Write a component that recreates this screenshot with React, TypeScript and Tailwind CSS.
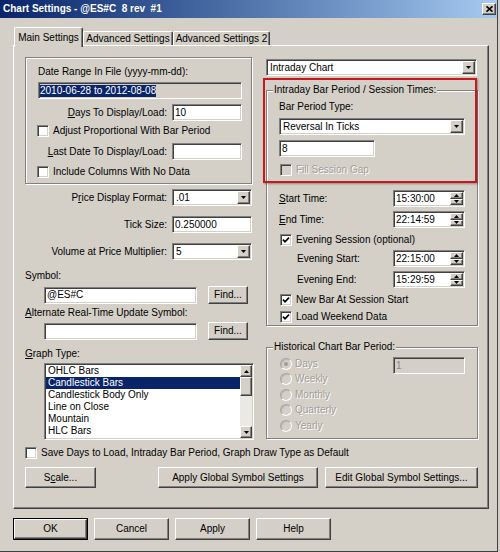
import React from "react";

const sunkenBase =
  "border border-t-[#808080] border-l-[#808080] border-b-white border-r-white shadow-[inset_1px_1px_0_#404040,inset_-1px_-1px_0_#d4d0c8]";
const raisedBase =
  "bg-[#d4d0c8] border border-t-white border-l-white border-b-[#404040] border-r-[#404040] shadow-[inset_-1px_-1px_0_#808080]";
const etched = "border border-[#808080] shadow-[inset_1px_1px_0_#fff,1px_1px_0_#fff]";
const disabledText = "text-[#a19e98] [text-shadow:1px_1px_0_#fff]";

function Tri({ up }: { up?: boolean }) {
  return (
    <svg width="5" height="3" viewBox="0 0 5 3" className="block">
      {up ? <path d="M0 3 H5 L2.5 0 Z" fill="#000" /> : <path d="M0 0 H5 L2.5 3 Z" fill="#000" />}
    </svg>
  );
}

function Field({ cls, value, gray }: { cls: string; value?: string; gray?: boolean }) {
  return (
    <div className={`${cls} h-[17px] ${gray ? "bg-[#d4d0c8] text-[#8a8884]" : "bg-white"} ${sunkenBase} flex items-center pl-[2px]`}>
      {value}
    </div>
  );
}

function Combo({ cls, value }: { cls: string; value: string }) {
  return (
    <div className={`${cls} h-[17px] bg-white ${sunkenBase} flex p-[1px]`}>
      <div className="flex-1 flex items-center pl-[2px]">{value}</div>
      <div className={`w-[13px] ${raisedBase} flex items-center justify-center`}>
        <Tri />
      </div>
    </div>
  );
}

function Spin({ value }: { value: string }) {
  return (
    <div className={`w-[72px] h-[17px] bg-white ${sunkenBase} flex p-[1px]`}>
      <div className="flex-1 flex items-center pl-[1px]">{value}</div>
      <div className="w-[13px] flex flex-col">
        <div className={`flex-1 ${raisedBase} flex items-center justify-center`}>
          <Tri up />
        </div>
        <div className={`flex-1 ${raisedBase} flex items-center justify-center`}>
          <Tri />
        </div>
      </div>
    </div>
  );
}

function Check({ checked, disabled }: { checked?: boolean; disabled?: boolean }) {
  return (
    <div className={`w-[12px] h-[12px] shrink-0 ${disabled ? "bg-[#d4d0c8]" : "bg-white"} ${sunkenBase} flex items-center justify-center`}>
      {checked && (
        <svg width="8" height="8" viewBox="0 0 8 8" className="block">
          <path d="M1 3.6 L3 5.8 L7 1.6" stroke="#000" strokeWidth="1.7" fill="none" />
        </svg>
      )}
    </div>
  );
}

function Radio({ checked }: { checked?: boolean }) {
  return (
    <div className="w-[12px] h-[12px] shrink-0 rounded-full border border-t-[#a8a6a2] border-l-[#a8a6a2] border-b-white border-r-white shadow-[inset_1px_1px_0_#b8b6b2] bg-[#d4d0c8] flex items-center justify-center">
      {checked && <div className="w-[4px] h-[4px] rounded-full bg-[#a19e98]" />}
    </div>
  );
}

function Btn({ cls, children }: { cls: string; children: React.ReactNode }) {
  return <div className={`${cls} ${raisedBase} flex items-center justify-center`}>{children}</div>;
}

function U({ children }: { children: React.ReactNode }) {
  return <span className="underline underline-offset-[1px]">{children}</span>;
}

export default function App() {
  return (
    <div className="font-['Liberation_Sans',Arial,sans-serif] text-[10px] leading-[12px] text-black w-[500px] h-[552px] bg-[#d4d0c8] overflow-hidden">
      <div className="w-[498px] h-[552px] flex flex-col border-r border-b border-[#404040]">
        {/* Title bar */}
        <div className="h-[18px] shrink-0 flex items-center justify-between bg-linear-to-r from-[#0a246a] to-[#a6caf0] pl-[3px] pr-[1px]">
          <span className="text-white font-bold whitespace-pre">Chart Settings - @ES#C  8 rev  #1</span>
          <div className={`w-[14px] h-[12px] ${raisedBase} flex items-center justify-center`}>
            <svg width="7" height="6" viewBox="0 0 7 6" className="block">
              <path d="M0.5 0.3 L6.5 5.7 M6.5 0.3 L0.5 5.7" stroke="#000" strokeWidth="1.6" />
            </svg>
          </div>
        </div>

        {/* Tabs */}
        <div className="ml-[13px] mt-[9px] h-[18px] flex items-end pl-[1px]">
          <div className="relative z-10 w-[69px] h-[20px] mb-[-2px] bg-[#d4d0c8] border-l border-t border-white border-r border-r-[#404040] shadow-[inset_-1px_0_0_#808080] rounded-t-[2px] flex justify-center pt-[4px]">
            Main Settings
          </div>
          <div className="w-[90px] h-[14px] border-l border-t border-white border-r border-r-[#404040] shadow-[inset_-1px_0_0_#808080] rounded-t-[2px] flex justify-center pt-[1px]">
            Advanced Settings
          </div>
          <div className="w-[97px] h-[14px] border-l border-t border-white border-r border-r-[#404040] shadow-[inset_-1px_0_0_#808080] rounded-t-[2px] flex justify-center pt-[1px]">
            Advanced Settings 2
          </div>
        </div>

        {/* Tab panel */}
        <div className="ml-[13px] w-[476px] h-[464px] shrink-0 border-l border-t border-white border-r border-b border-r-[#404040] border-b-[#404040] shadow-[inset_-1px_-1px_0_#808080] pl-[11px] pr-[10px] pt-[11px] flex flex-col">
          <div className="flex">
            {/* Left column */}
            <div className="w-[228px] flex flex-col">
              <div className={`w-[227px] h-[127px] ${etched} pl-[12px] pt-[8px] flex flex-col`}>
                <div className="h-[12px]">Date Range In File (yyyy-mm-dd):</div>
                <div className={`mt-[4px] w-[204px] h-[17px] bg-[#d4d0c8] ${sunkenBase} flex items-center pl-[1px]`}>
                  <span className="bg-[#0a246a] text-white h-[12px]">2010-06-28 to 2012-08-08</span>
                </div>
                <div className="mt-[5px] h-[17px] flex items-center">
                  <div className="w-[129px] text-right">
                    <U>D</U>ays To Display/Load:
                  </div>
                  <Field cls="ml-[5px] w-[70px]" value="10" />
                </div>
                <div className="mt-[4px] h-[12px] flex items-center ml-[-1px] gap-[4px]">
                  <Check />
                  <span>Adjust Proportional With Bar Period</span>
                </div>
                <div className="mt-[6px] h-[17px] flex items-center">
                  <div className="w-[129px] text-right">
                    <U>L</U>ast Date To Display/Load:
                  </div>
                  <Field cls="ml-[5px] w-[70px]" />
                </div>
                <div className="mt-[6px] h-[12px] flex items-center ml-[-1px] gap-[4px]">
                  <Check />
                  <span>Include Columns With No Data</span>
                </div>
              </div>

              <div className="mt-[5px] h-[17px] flex items-center">
                <div className="w-[142px] text-right">
                  P<U>r</U>ice Display Format:
                </div>
                <Combo cls="ml-[5px] w-[80px]" value=".01" />
              </div>
              <div className="mt-[10px] h-[17px] flex items-center">
                <div className="w-[142px] text-right">Tick Size:</div>
                <Field cls="ml-[5px] w-[80px]" value="0.250000" />
              </div>
              <div className="mt-[10px] h-[17px] flex items-center">
                <div className="w-[142px] text-right">Volume at Price Multiplier:</div>
                <Combo cls="ml-[5px] w-[80px]" value="5" />
              </div>

              <div className="mt-[10px] h-[12px]">Symbol:</div>
              <div className="mt-[4px] h-[18px] flex items-center">
                <Field cls="ml-[19px] w-[153px]" value="@ES#C" />
                <Btn cls="ml-[11px] w-[40px] h-[18px]">Find...</Btn>
              </div>
              <div className="mt-[3px] h-[12px]">
                <U>A</U>lternate Real-Time Update Symbol:
              </div>
              <div className="mt-[3px] h-[18px] flex items-center">
                <Field cls="ml-[19px] w-[153px]" />
                <Btn cls="ml-[11px] w-[40px] h-[18px]">Find...</Btn>
              </div>
              <div className="mt-[8px] h-[12px]">
                <U>G</U>raph Type:
              </div>
              <div className={`mt-[3px] ml-[19px] w-[210px] h-[77px] bg-white ${sunkenBase} p-[1px] flex`}>
                <div className="flex-1 flex flex-col bg-white">
                  <div className="h-[12px] pl-[2px]">OHLC Bars</div>
                  <div className="h-[12px] pl-[2px] bg-[#0a246a] text-white">Candlestick Bars</div>
                  <div className="h-[12px] pl-[2px]">Candlestick Body Only</div>
                  <div className="h-[12px] pl-[2px]">Line on Close</div>
                  <div className="h-[12px] pl-[2px]">Mountain</div>
                  <div className="h-[12px] pl-[2px]">HLC Bars</div>
                </div>
                <div className="w-[12px] flex flex-col bg-[#ebe9e5]">
                  <div className={`h-[12px] ${raisedBase} flex items-center justify-center`}>
                    <Tri up />
                  </div>
                  <div className={`h-[19px] ${raisedBase}`} />
                  <div className="flex-1" />
                  <div className={`h-[12px] ${raisedBase} flex items-center justify-center`}>
                    <Tri />
                  </div>
                </div>
              </div>
            </div>

            {/* Right column */}
            <div className="relative ml-[13px] w-[212px] flex flex-col">
              <Combo cls="mt-[2px] w-[211px]" value="Intraday Chart" />

              <div className={`mt-[14px] ${etched} pl-[12px] pr-[12px] pb-[2px] flex flex-col`}>
                <span className="-mt-[7px] ml-[-6px] px-[1px] w-fit h-[12px] bg-[#d4d0c8]">
                  Intraday Bar Period / Session Times:
                </span>
                <div className="mt-[5px] h-[12px]">Bar Period Type:</div>
                <Combo cls="mt-[5px] w-[186px]" value="Reversal In Ticks" />
                <Field cls="mt-[5px] w-[96px]" value="8" />
                <div className="mt-[7px] h-[12px] flex items-center ml-[1px] gap-[4px]">
                  <Check disabled />
                  <span className={disabledText}>Fill Session Gap</span>
                </div>
                <div className="mt-[14px] h-[17px] flex items-center justify-between">
                  <span>
                    <U>S</U>tart Time:
                  </span>
                  <Spin value="15:30:00" />
                </div>
                <div className="mt-[4px] h-[17px] flex items-center justify-between">
                  <span>
                    <U>E</U>nd Time:
                  </span>
                  <Spin value="22:14:59" />
                </div>
                <div className="mt-[6px] h-[12px] flex items-center ml-[1px] gap-[4px]">
                  <Check checked />
                  <span>Evening Session (optional)</span>
                </div>
                <div className="mt-[4px] h-[17px] flex items-center justify-between">
                  <span className="pl-[18px]">Evening Start:</span>
                  <Spin value="22:15:00" />
                </div>
                <div className="mt-[4px] h-[17px] flex items-center justify-between">
                  <span className="pl-[18px]">Evening End:</span>
                  <Spin value="15:29:59" />
                </div>
                <div className="mt-[6px] h-[12px] flex items-center ml-[1px] gap-[4px]">
                  <Check checked />
                  <span>New Bar At Session Start</span>
                </div>
                <div className="mt-[5px] h-[12px] flex items-center ml-[1px] gap-[4px]">
                  <Check checked />
                  <span>Load Weekend Data</span>
                </div>
              </div>

              <div className={`mt-[21px] h-[92px] ${etched} pl-[13px] pr-[12px] flex flex-col`}>
                <span className="-mt-[7px] ml-[-7px] px-[1px] w-fit h-[12px] bg-[#d4d0c8]">
                  Historical Chart Bar Period:
                </span>
                <div className="flex justify-between">
                  <div className="mt-[3px] flex flex-col">
                    {["Days", "Weekly", "Monthly", "Quarterly", "Yearly"].map((t, i) => (
                      <div key={t} className="h-[15.5px] flex items-center gap-[3px]">
                        <Radio checked={i === 0} />
                        <span className={disabledText}>{t}</span>
                      </div>
                    ))}
                  </div>
                  <Field cls="mt-[4px] w-[72px]" value="1" gray />
                </div>
              </div>

              <div className="absolute left-[-3px] top-[21px] w-[214px] h-[105px] border-2 border-[#c8171d] shadow-[1px_1px_2px_rgba(0,0,0,0.35)] pointer-events-none" />
            </div>
          </div>

          <div className="mt-[7px] h-[12px] flex items-center gap-[4px]">
            <Check />
            <span>Save Days to Load, Intraday Bar Period, Graph Draw Type as Default</span>
          </div>
          <div className="mt-[8px] h-[21px] flex justify-between">
            <Btn cls="w-[71px] h-[21px]">
              S<U>c</U>ale...
            </Btn>
            <div className="flex gap-[7px]">
              <Btn cls="w-[160px] h-[21px]">Apply Global Symbol Settings</Btn>
              <Btn cls="w-[153px] h-[21px]">Edit Global Symbol Settings...</Btn>
            </div>
          </div>
        </div>

        {/* Bottom buttons */}
        <div className="ml-[13px] mt-[9px] flex gap-[6px]">
          <div className="w-[75px] h-[22px] border border-black">
            <Btn cls="w-full h-full">OK</Btn>
          </div>
          <Btn cls="w-[75px] h-[22px]">Cancel</Btn>
          <Btn cls="w-[75px] h-[22px]">Apply</Btn>
          <Btn cls="w-[75px] h-[22px]">Help</Btn>
        </div>
      </div>
    </div>
  );
}
